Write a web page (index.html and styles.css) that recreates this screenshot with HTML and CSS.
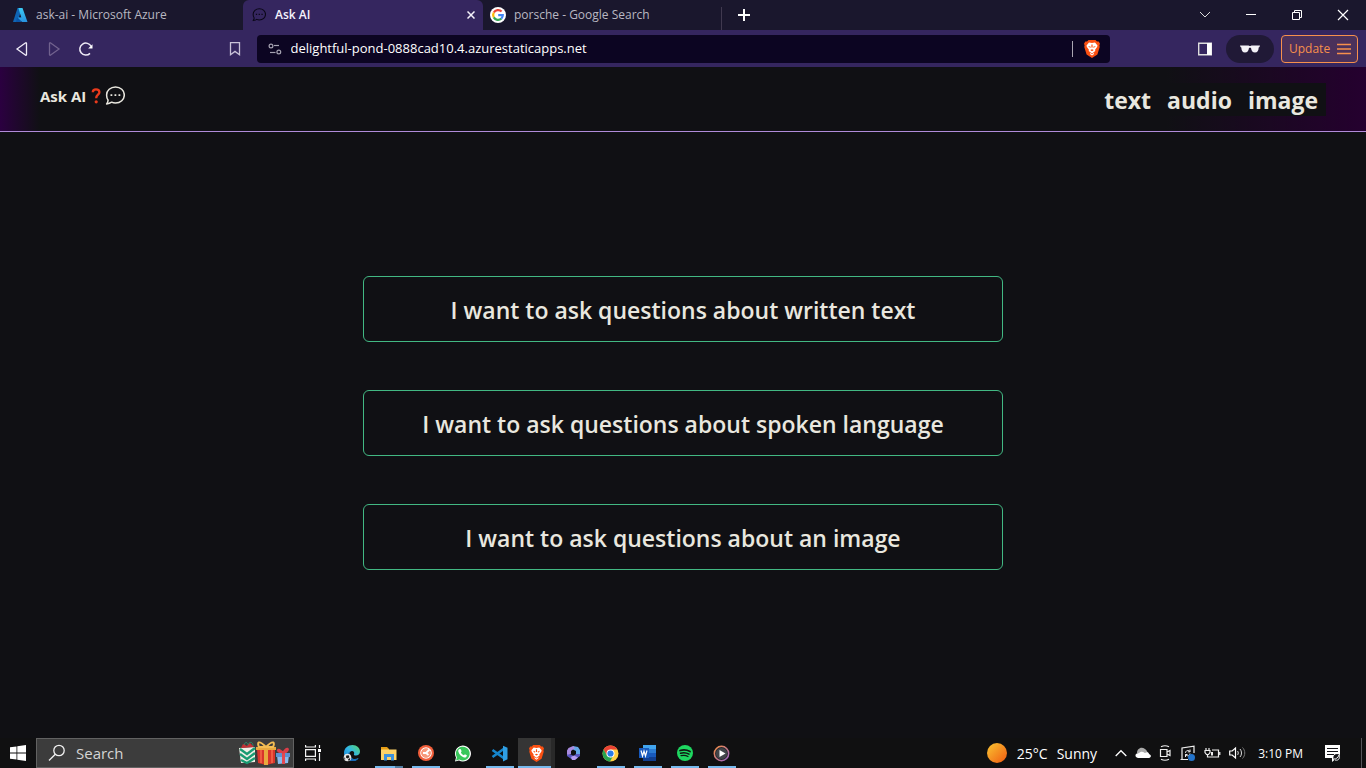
FILE: index.html
```html
<!DOCTYPE html>
<html lang="en">
<head>
<meta charset="utf-8">
<meta name="viewport" content="width=device-width, initial-scale=1">
<title>Ask AI</title>
<link rel="stylesheet" href="styles.css">
</head>
<body>
<svg class="defs" aria-hidden="true">
  <defs>
    <linearGradient id="azure" x1="0" y1="0" x2="0" y2="1"><stop offset="0" stop-color="#3ccbf4"/><stop offset="1" stop-color="#2892df"/></linearGradient>
    <linearGradient id="sun" x1="0" y1="0" x2="1" y2="1"><stop offset="0.15" stop-color="#f8b62d"/><stop offset="0.85" stop-color="#f26a16"/></linearGradient>
    <linearGradient id="edge" x1="0" y1="1" x2="1" y2="0"><stop offset="0" stop-color="#1578cd"/><stop offset="0.5" stop-color="#31b5e8"/><stop offset="1" stop-color="#58d86c"/></linearGradient>
    <linearGradient id="media" x1="0" y1="0" x2="1" y2="1"><stop offset="0" stop-color="#f79043"/><stop offset="1" stop-color="#9862c8"/></linearGradient>
    <symbol id="brave" viewBox="0 0 16 18">
      <path fill="#fb5012" d="M4.500 0h7l1.500 1.500 1.700-.1L16 3.700l-.6 1.500.3 1.800-2.300 7.500L8 18l-5.400-3.500L.3 7l.3-1.800L0 3.700l1.300-2.300 1.700.1z"/>
      <path fill="#fff" d="M8 3l3-.5 2.500 3-.4 1.500-2 2.700.2 1.300L8 13.600 4.700 11l.2-1.300-2-2.700-.4-1.500 2.500-3z"/>
      <path fill="#fb5012" d="M4 6l2.800.8-.5 1.300zM12 6l-2.800.8.5 1.300zM6.200 10L8 9.200l1.800.8L8 11.200zM7.400 4.500h1.200v3H7.400z"/>
      <path fill="#fff" d="M5.800 12.800L8 14.300l2.200-1.500-.4 1.500L8 15.600l-1.800-1.300z"/>
    </symbol>
    <symbol id="bubble" viewBox="0 0 20 20">
      <path fill="none" stroke="currentColor" stroke-width="1.500" stroke-linejoin="round" d="M10.500 1c5 0 8.800 3.500 8.800 8s-3.800 8-8.800 8c-1.400 0-2.700-.2-3.800-.8-1.300.9-3 1.600-5.100 1.800 1-1.200 1.400-2.400 1.500-3.700C2.200 13 1.600 11.200 1.600 9c0-4.500 3.900-8 8.900-8z"/>
      <path fill="currentColor" d="M5.500 8.200h1.800V10H5.500zm4 0h1.800V10H9.500zm4 0h1.800V10h-1.800z"/>
    </symbol>
  </defs>
</svg>

<div class="tabs" role="tablist" aria-label="Tabs">
  <div class="tab" role="tab">
    <svg class="tab-icon" viewBox="0 0 16 16"><path fill="#0f65b4" d="M5.500 1h4.600L5.300 15H1z"/><path fill="#0b56a8" d="M5 10.500h5.800L9 15H4z"/><path fill="url(#azure)" d="M6.400 1H10.500L15.500 15H10L5.600 10.500h3.800L7.700 5.500z"/></svg>
    <span class="tab-title">ask-ai - Microsoft Azure</span>
  </div>
  <div class="tab tab-active" role="tab" aria-selected="true">
    <svg class="tab-icon tab-bubble"><use href="#bubble"/></svg>
    <span class="tab-title">Ask AI</span>
    <button class="plain" aria-label="Close tab"><svg width="8" height="8" viewBox="0 0 8 8"><path d="M.5.5l7 7m0-7l-7 7" stroke="#f4f1fa" stroke-width="1.500"/></svg></button>
  </div>
  <div class="tab tab-last" role="tab">
    <svg class="tab-icon" viewBox="0 0 16 16"><circle cx="8" cy="8" r="8" fill="#fff"/><g fill="none" stroke-width="2.200"><path stroke="#ea4335" d="M3.800 5.600A4.900 4.900 0 0 1 11.600 4.500"/><path stroke="#fbbc05" d="M3.800 5.600a5 5 0 0 0 0 4.800"/><path stroke="#34a853" d="M3.800 10.400a4.900 4.900 0 0 0 7.500 1.300"/><path stroke="#4285f4" d="M8.200 8.100h4.600c0 1.500-.5 2.700-1.500 3.600"/></g></svg>
    <span class="tab-title">porsche - Google Search</span>
  </div>
  <button class="plain new-tab" aria-label="New tab"><svg width="12" height="12" viewBox="0 0 12 12"><path d="M6 0v12M0 6h12" stroke="#fff" stroke-width="2"/></svg></button>
  <div class="window-controls">
    <button class="plain" aria-label="Search tabs"><svg width="12" height="12" viewBox="0 0 12 12"><path d="M1 3l5 5 5-5" fill="none" stroke="#ddd"/></svg></button>
    <button class="plain" aria-label="Minimize"><svg width="12" height="12" viewBox="0 0 12 12"><path d="M1 5.500h10" stroke="#fff"/></svg></button>
    <button class="plain" aria-label="Restore"><svg width="12" height="12" viewBox="0 0 12 12"><path d="M1.500 3.500h7v7h-7zM3.500 3V1.500h7v7H9" fill="none" stroke="#fff"/></svg></button>
    <button class="plain" aria-label="Close"><svg width="12" height="12" viewBox="0 0 12 12"><path d="M1 1l10 10M11 1L1 11" stroke="#fff" stroke-width="1.200"/></svg></button>
  </div>
</div>

<div class="toolbar">
  <div class="nav-buttons">
    <button class="plain" aria-label="Back"><svg width="14" height="16" viewBox="0 0 14 16"><path d="M11.500 2.200v11.600a.5.5 0 0 1-.8.400L2 8l8.700-6.200a.5.5 0 0 1 .8.400z" fill="none" stroke="#eeeaf6" stroke-width="1.300"/></svg></button>
    <button class="plain" aria-label="Forward" disabled><svg width="14" height="16" viewBox="0 0 14 16"><path d="M2.500 2.200v11.600a.5.5 0 0 0 .8.400L12 8 3.300 1.800a.5.5 0 0 0-.8.400z" fill="none" stroke="#71628e" stroke-width="1.300"/></svg></button>
    <button class="plain" aria-label="Reload"><svg width="16" height="16" viewBox="0 0 16 16"><path d="M12 12.400a6 6 0 1 1 1.200-6.900" fill="none" stroke="#eeeaf6" stroke-width="1.500"/><path d="M14.500 3.200v4.300h-4.300z" fill="#fff"/></svg></button>
    <button class="plain bookmark" aria-label="Bookmark"><svg width="12" height="14" viewBox="0 0 12 14"><path d="M1.500.7h9v12L6 9.400l-4.500 3.300z" fill="none" stroke="#c9c2d8" stroke-width="1.300"/></svg></button>
  </div>
  <div class="address">
    <svg width="14" height="12" viewBox="0 0 14 12"><g fill="none" stroke="#a5a2b1" stroke-width="1.200"><circle cx="3" cy="3" r="1.900"/><path d="M6 2.500h5"/><circle cx="10.800" cy="9" r="1.900"/><path d="M2 9.500h5.500"/></g></svg>
    <input class="address-input" aria-label="Address" value="delightful-pond-0888cad10.4.azurestaticapps.net">
    <span class="address-divider"></span>
    <svg width="16" height="18"><use href="#brave"/></svg>
  </div>
  <div class="actions">
    <button class="plain" aria-label="Sidebar"><svg width="14" height="14" viewBox="0 0 14 14"><path d="M.7 1.200h12.600v11.600H.7z" fill="none" stroke="#ddd" stroke-width="1.400"/><path d="M9 1h4.500v12H9z" fill="#fff"/></svg></button>
    <button class="plain private" aria-label="Private"><svg width="22" height="8" viewBox="0 0 22 8"><path fill="#f3f1f7" d="M1 .5h7.500c1.500 0 1.700.6 2.500.6s1-.6 2.500-.6H21l-.5 1.500-.8.500c-.2 3.300-1.300 5-3.700 5-2.300 0-3.500-1.500-4-4.500-.5-.4-1.500-.4-2 0-.5 3-1.700 4.500-4 4.500-2.400 0-3.500-1.700-3.700-5L1.500 2z"/></svg></button>
    <button class="update">Update <svg width="14" height="12" viewBox="0 0 14 12"><path d="M0 1.500h14M0 6h14M0 10.500h14" stroke="currentColor" stroke-width="1.300"/></svg></button>
  </div>
</div>

<header class="site-header">
  <a class="brand" href="#">Ask AI<svg class="question" viewBox="0 0 10 16" role="img" aria-label="question mark"><path d="M1.800 4.300C1.800 2.300 3.100 1.300 5 1.300s3.400 1 3.400 2.900c0 2.600-3.200 2.500-3.200 6" fill="none" stroke="#e93a1c" stroke-width="2.300"/><circle cx="5.200" cy="13.800" r="1.600" fill="#e93a1c"/></svg><svg class="brand-bubble"><use href="#bubble"/></svg></a>
  <nav class="site-nav">
    <a href="#text">text</a>
    <a href="#audio">audio</a>
    <a href="#image">image</a>
  </nav>
</header>

<main class="choices">
  <button class="choice">I want to ask questions about written text</button>
  <button class="choice">I want to ask questions about spoken language</button>
  <button class="choice">I want to ask questions about an image</button>
</main>

<footer class="taskbar">
  <button class="plain start" aria-label="Start"><svg width="16" height="16" viewBox="0 0 16 16"><path fill="#fff" d="M0 2.300l6.500-.9v6.200H0zM7.300 1.300L16 0v7.600H7.300zM0 8.400h6.500v6.200L0 13.700zM7.300 8.400H16V16l-8.700-1.200z"/></svg></button>
  <div class="search">
    <svg width="18" height="18" viewBox="0 0 18 18"><g fill="none" stroke="#f1f1f1" stroke-width="1.300"><circle cx="11" cy="6.500" r="5.200"/><path d="M7.300 10.200L1 16.500"/></g></svg>
    <input class="search-input" aria-label="Search" placeholder="Search">
    <svg width="52" height="26" viewBox="0 0 52 26">
      <path d="M5 7c0-6 4-6 5 0M9 7c0-6 5-6 5-1" fill="none" stroke="#2b8d6b"/><path fill="#f1eee6" d="M0 8l16-1v15L2 23z"/><path fill="#c43135" d="M2 8l2-4 4 2 3-3 4 4z"/><path d="M1 9l7 5 8-6M1 14l7 5 8-6M2 20l6 3 8-5" fill="none" stroke="#199b72" stroke-width="2.400"/>
      <path fill="#d8352b" d="M18 8h18v15l-9 2-8-2z"/><path fill="#ee5b42" d="M21 10h2v13h-2zM32 10h2v13h-2z"/><path fill="#e9a93f" d="M17 7h20v3H17zM25 7h4v18h-4z"/><path d="M27 7c-8-8-9-4-7 0zM27 7c8-8 9-4 7 0z" fill="none" stroke="#f4bd53" stroke-width="2"/>
      <path fill="#88bbef" d="M38 15h12l-1 8-10 1z"/><path fill="#5d92d2" d="M37 13h14v4H37z"/><path fill="#e34952" d="M43 13h3v11h-3z"/><path d="M44 13c-5-6-7-2-3-1h6c4-3 1-6-3 1" fill="none" stroke="#db3e49" stroke-width="2"/>
    </svg>
  </div>
  <button class="plain app" aria-label="Task view"><svg width="18" height="16" viewBox="0 0 18 16"><g fill="none" stroke="#f4f4f4" stroke-width="1.200"><path d="M1.600 4.600h9.800v6.800H1.600zM1.600 0v2h9.800V0M1.600 16v-2h9.800v2M15.500 0v3M15.500 8v8"/></g><path fill="#fff" d="M14 4h3v3h-3z"/></svg></button>
  <button class="plain app app-first" aria-label="Edge"><svg width="18" height="18" viewBox="0 0 18 18"><path fill="url(#edge)" d="M1 9C1 4 5 1 9.500 1 14 1 17 4 17 7.500c0 2.500-1.800 4-4 4-1.500 0-2.500-.6-2-1.300.7-1.500-.2-3.200-2-3.200-3 0-3.500 4-1 6.500 2 2 5 2 7.500.5-1.500 2.300-4 3.500-7 3C4 16.500 1 13 1 9z"/><path fill="#1767b5" d="M7 7c-2 3-.5 7 3 8 2 .6 4 .2 5.800-.8C14 16.500 11.500 17.400 8 17c-4-1-4.500-7-1-10z"/><circle cx="4.500" cy="13.500" r="3.800" fill="#e8e8e8"/><path fill="#171717" d="M3.300 11.600l2.400-.4.800 2-2 1.200-1.600-1zm2 3.400l2-1-.5 2.600H5zM.9 13l1.500 1.800-.6 1.400z"/></svg></button>
  <button class="plain app app-open app-grouped" aria-label="File Explorer"><svg width="17" height="15" viewBox="0 0 17 15"><path fill="#e69e16" d="M1 1h6l2 2v3H1z"/><path fill="#ffd367" d="M1 3.500h15.500V14H1z"/><path fill="#3e92dc" d="M4 8h10v6.500h-3V11H7v3.500H4z"/></svg></button>
  <button class="plain app app-open" aria-label="Time tracker"><svg width="16" height="16" viewBox="0 0 16 16"><circle cx="8" cy="8" r="8" fill="#f15e3a"/><circle cx="8" cy="8" r="5.200" fill="none" stroke="#fff" stroke-width="1.200"/><circle cx="8" cy="8" r="4.600" fill="#f79a7c"/><path d="M11.500 4.500L8 8l2.500 2M5 8h3" fill="none" stroke="#fff" stroke-width="1.800"/></svg></button>
  <button class="plain app" aria-label="WhatsApp"><svg width="17" height="17" viewBox="0 0 17 17"><path fill="#fff" d="M1 16.500l1-4A8 8 0 1 1 5 15.500z"/><path fill="#39c75b" d="M2 15.500l.9-3.300a6.900 6.900 0 1 1 2.500 2.400z"/><path fill="#fff" d="M5.500 4l1.300.2.800 2-.7 1.200c.7 1.300 1.600 2.200 3 2.800l1-1 2 1c-.2 2-1.400 2.500-2.900 2.200C7.300 11.700 5 9.400 4.300 6.500 4 5.500 4.600 4.500 5.500 4z"/></svg></button>
  <button class="plain app app-open" aria-label="VS Code"><svg width="17" height="17" viewBox="0 0 17 17"><path d="M1.500 5L14 14M1.500 12L14 3" stroke="#1686cc" stroke-width="2.600"/><path fill="#2f9fe4" d="M12 .8l4.500 2v11.500L12 16.500z"/></svg></button>
  <button class="plain app app-open app-current" aria-label="Brave"><svg width="15" height="17"><use href="#brave"/></svg></button>
  <button class="plain app" aria-label="Microsoft 365"><svg width="15" height="16" viewBox="0 0 15 16"><path fill="#63a6e6" d="M7 1l5 1 2 3v6l-4-2V6L7 4.500z"/><path fill="#a98be0" d="M7 1L2.500 3 1 5.500V11l4-2V6l4-3z"/><path fill="#5a57c0" d="M1 9.500V11l5 3.500h3l5-3.500v-2L10 9l-2.500 2L5 9.500z"/><path fill="#b79cf0" d="M5 12l3-1.500 4 2-3 2.500H6z"/></svg></button>
  <button class="plain app app-open" aria-label="Chrome"><svg width="17" height="17" viewBox="0 0 17 17"><circle cx="8.500" cy="8.500" r="8" fill="#ffd043"/><path fill="#ea4335" d="M1.600 4.500a8 8 0 0 1 13.800 0H8.500v4L5 10.500z"/><path fill="#27a450" d="M1.600 4.500L5 10.500l3.500 2 2-.5-2.500 4.500A8 8 0 0 1 1.600 4.500z"/><circle cx="8.500" cy="8.500" r="4" fill="#fff"/><circle cx="8.500" cy="8.500" r="3.100" fill="#287de9"/></svg></button>
  <button class="plain app app-open" aria-label="Word"><svg width="17" height="16" viewBox="0 0 17 16"><path fill="#41a5ee" d="M4 0h13v4H4z"/><path fill="#2b7cd3" d="M4 4h13v4H4z"/><path fill="#185abd" d="M4 8h13v4H4z"/><path fill="#103f91" d="M4 12h13v4H4z"/><path fill="#185abd" d="M0 3h10v10H0z"/><path d="M2 5.500L3.500 11 5 6l1.500 5L8 5.500" fill="none" stroke="#fff" stroke-width="1.200"/></svg></button>
  <button class="plain app app-open" aria-label="Spotify"><svg width="16" height="16" viewBox="0 0 16 16"><circle cx="8" cy="8" r="8" fill="#1ed760"/><g fill="none" stroke="#101713" stroke-linecap="round"><path stroke-width="1.800" d="M3 5.500c3.500-1 7-.7 10 1"/><path stroke-width="1.500" d="M3.500 8.200c3-.8 6-.5 8.500 1"/><path stroke-width="1.200" d="M4 10.700c2.500-.6 5-.4 7 .8"/></g></svg></button>
  <button class="plain app app-open" aria-label="Media Player"><svg width="17" height="17" viewBox="0 0 17 17"><circle cx="8.500" cy="8.500" r="7.200" fill="#24262a" stroke="url(#media)" stroke-width="1.500"/><circle cx="8.500" cy="8.500" r="5.600" fill="#42454a"/><path fill="#fff" d="M6.500 5l6 3.500-6 3.500z"/></svg></button>

  <div class="tray">
    <svg width="20" height="20" viewBox="0 0 20 20"><circle cx="10" cy="10" r="10" fill="url(#sun)"/></svg>
    <span class="weather"><span>25°C</span><span>Sunny</span></span>
    <div class="tray-icons">
      <svg width="12" height="8" viewBox="0 0 12 8"><path d="M.7 7L6 1.700 11.300 7" fill="none" stroke="#fff" stroke-width="1.300"/></svg>
      <svg width="16" height="12" viewBox="0 0 16 12"><path fill="#aaa" d="M2 6c0-4 4-7 8-4 2 1 2 3 3 4z"/><path fill="#fff" d="M3 11c-4-1-3-5 1-5 3-3 6 0 6 0 3-2 4 0 4 1 3 1 2 4 0 4z"/></svg>
      <svg width="12" height="16" viewBox="0 0 12 16"><g fill="none" stroke="#eee" stroke-width="1.200"><path d="M1.500 4.500h6.500v7H1.500zM8 7l3-1.500v5L8 9M2 1.800c2.500-1.300 5.500-1.300 8 0M2 14.200c2.500 1.300 5.500 1.300 8 0"/></g></svg>
      <svg width="17" height="16" viewBox="0 0 17 16"><path d="M9 14.500H1.500M3 14V3l12-1.800V8" fill="none" stroke="#eee" stroke-width="1.200"/><path d="M6.500 8c0-2.500 3-3.500 4.500-1.500M11 4.500v2.300H8.800M11 8.500c-.5 2.500-3 3-4.500 1.200M6.500 12V9.500h2" fill="none" stroke="#eee"/><circle cx="12.500" cy="12.500" r="3.500" fill="#2373ca"/></svg>
      <svg width="17" height="13" viewBox="0 0 17 13"><g fill="none" stroke="#eee" stroke-width="1.200"><path d="M8 3h6.500v7h-9M15.800 5v3M1 3.500h5v2L4.500 7.500h-2L1 5.500zM2 3V1M5 3V1M3.500 7.500V10h2"/></g><path fill="#eee" d="M7 5h2v3.500H7z"/></svg>
      <svg width="17" height="14" viewBox="0 0 17 14"><path d="M.7 5h2.500L6.500 2v10L3.200 9H.7z" fill="none" stroke="#fff" stroke-width="1.200"/><path d="M8.500 5c1 1 1 3 0 4M11 3c2 2 2 6 0 8" fill="none" stroke="#ddd"/><path d="M13.500 1.500c3 3 3 8 0 11" fill="none" stroke="#777"/></svg>
    </div>
    <time class="clock">3:10 PM</time>
    <svg class="notifications" width="17" height="17" viewBox="0 0 17 17"><path fill="#fff" d="M1 0h15v13h-3l-5 4v-4H1z"/><path d="M3 3.500h11M3 6.500h11M3 9.500h7" stroke="#151519" stroke-width="1.200"/><circle cx="13" cy="12.500" r="3.600" fill="#151519"/><path d="M11 15c4 1 5-2 4-5-1 3-3 4-5 4" fill="none" stroke="#eee"/></svg>
    <span class="desktop-edge"></span>
  </div>
</footer>
</body>
</html>
```

FILE: styles.css
```css
* { box-sizing: border-box; }

body {
  margin: 0;
  min-height: 100vh;
  display: flex;
  flex-direction: column;
  background: #101014;
  color: #e9e7df;
  font-family: "Open Sans", "Noto Sans", sans-serif;
}

button, input { font: inherit; color: inherit; }
a { color: inherit; text-decoration: none; }
svg { display: block; flex: none; }
.defs { position: absolute; width: 0; height: 0; }

.plain {
  display: flex;
  align-items: center;
  justify-content: center;
  border: 0;
  padding: 0;
  background: none;
}

/* Tab strip */
.tabs {
  display: flex;
  height: 30px;
  background: #1a172d;
  font-size: 12px;
  color: #b9b7c2;
}
.tab {
  display: flex;
  align-items: center;
  flex: 0 1 240px;
  gap: 8px;
  padding: 0 8px;
}
.tab:first-child { flex-basis: 243px; padding-left: 12px; }
.tab-title { flex: 1; padding-bottom: 1px; white-space: nowrap; }
.tab-icon { width: 16px; height: 16px; }
.tab-bubble { width: 14px; height: 14px; color: #0a0717; }
.tab-active {
  gap: 9px;
  padding-left: 9px;
  background: #35265f;
  border-radius: 6px 6px 0 0;
  color: #f6f3fc;
  font-weight: 600;
}
.tab-last {
  flex-basis: 239px;
  padding-left: 7px;
  background: linear-gradient(#40394f, #40394f) right bottom / 1px 23px no-repeat;
}
.new-tab { width: 44px; }
.window-controls { display: flex; margin-left: auto; }
.window-controls .plain { width: 46px; }

/* Toolbar */
.toolbar {
  display: flex;
  align-items: center;
  height: 37px;
  padding: 0 8px;
  background: #35265f;
  font-size: 13px;
}
.nav-buttons { display: flex; flex: 1; gap: 4px; }
.nav-buttons .plain { width: 28px; }
.nav-buttons .bookmark { margin: 0 8px 0 auto; }
.address {
  display: flex;
  align-items: center;
  flex: 0 1 853px;
  height: 28px;
  gap: 9px;
  padding: 0 10px 0 11px;
  border-radius: 4px;
  background: #0c0522;
  color: #fff;
}
.address-input {
  flex: 1;
  min-width: 0;
  border: 0;
  padding: 0 0 2px;
  background: none;
  outline: 0;
}
.address-divider { width: 1px; height: 16px; margin-right: 2px; background: #aaa6b2; }
.actions {
  display: flex;
  align-items: center;
  justify-content: flex-end;
  flex: 1;
  gap: 7px;
}
.actions > .plain:first-child { width: 28px; }
.actions > .private { width: 48px; height: 28px; border-radius: 14px; background: #201936; }
.update {
  display: flex;
  align-items: center;
  justify-content: space-between;
  width: 77px;
  height: 28px;
  padding: 0 6px 0 7px;
  border: 1px solid #f7904c;
  border-radius: 4px;
  background: #4b315b;
  color: #f7904c;
  font-size: 12px;
}

/* Site */
.site-header {
  display: flex;
  justify-content: space-between;
  height: 65px;
  padding: 16px 40px 15px;
  border-bottom: 1px solid #b08bd9;
  background:
    linear-gradient(to right, #2b0040, #10101400 40px),
    linear-gradient(to left, #25002f, #10101400 200px);
}
.brand {
  display: flex;
  align-items: center;
  height: 26px;
  font-size: 15px;
  font-weight: 700;
}
.question { width: 10px; height: 16px; margin: 0 4px 0 5px; }
.brand-bubble { width: 20px; height: 20px; }
.site-nav {
  display: flex;
  height: 33px;
  font-size: 23px;
  font-weight: 700;
  line-height: 34px;
  background: #101014;
}
.site-nav a { padding: 0 8px; }

.choices {
  display: flex;
  flex: 1;
  flex-direction: column;
  align-items: center;
  gap: 48px;
  padding: 144px 16px 48px;
}
.choice {
  width: 100%;
  max-width: 640px;
  padding: 17px 16px 15px;
  border: 1px solid #42b883;
  border-radius: 6px;
  background: none;
  font-size: 23px;
  font-weight: 600;
  line-height: 32px;
}

/* Taskbar */
.taskbar {
  display: flex;
  height: 30px;
  background: #101011;
  color: #fff;
}
.start { width: 36px; }
.search {
  display: flex;
  align-items: center;
  width: 258px;
  gap: 10px;
  padding: 0 2px 0 11px;
  border: 1px solid #626262;
  background: #3c3c3c;
}
.search-input {
  flex: 1;
  min-width: 0;
  border: 0;
  padding: 0;
  background: none;
  outline: 0;
  font-size: 15px;
}
.search-input::placeholder { color: #d4d4d4; opacity: 1; }
.app { width: 37px; }
.app-first { margin-left: 2px; }
.app-open {
  background: linear-gradient(#76b9ed, #76b9ed) center bottom / 28px 2px no-repeat;
}
.app-grouped {
  background: linear-gradient(to right, #76b9ed 20px, #527da1 20px) center bottom / 28px 2px no-repeat;
}
.app-current {
  background: linear-gradient(#76b9ed, #76b9ed) center bottom / 100% 2px no-repeat, #353535;
  box-shadow: inset -4px 0 #292929;
}
.tray {
  display: flex;
  align-items: center;
  margin-left: auto;
}
.weather { display: flex; gap: 9px; margin: 0 18px 0 10px; font-size: 14px; }
.tray-icons { display: flex; align-items: center; gap: 8px; }
.clock { margin: 0 21px 0 12px; font-size: 12px; }
.notifications { margin-right: 20px; }
.desktop-edge { width: 1px; height: 30px; margin-right: 4px; background: #55555a; }
```
